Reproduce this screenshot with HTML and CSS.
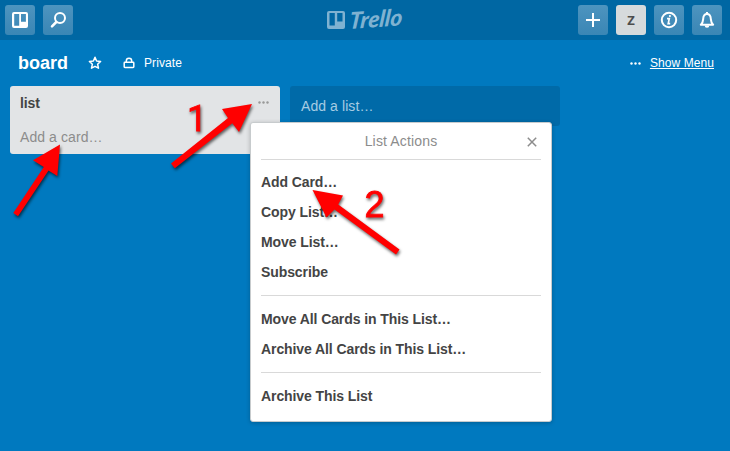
FILE: index.html
```html
<!DOCTYPE html>
<html lang="en">
<head>
<meta charset="utf-8">
<title>board | Trello</title>
<link rel="stylesheet" href="styles.css">
</head>
<body>
<header class="topbar">
  <div class="group">
    <button class="btn" aria-label="Boards"><svg width="30" height="30" viewBox="0 0 30 30"><path fill="#fff" fill-rule="evenodd" d="M9 7h12a2 2 0 0 1 2 2v12a2 2 0 0 1-2 2H9a2 2 0 0 1-2-2V9a2 2 0 0 1 2-2zM9.200 9v11.800h5V9zM16 9v7.800h4.900V9z"/></svg></button>
    <button class="btn" aria-label="Search"><svg width="30" height="30" viewBox="0 0 30 30" fill="none" stroke="#fff"><circle cx="17" cy="13" r="5" stroke-width="2"/><path d="M13.300 17l-4.300 4.300" stroke-width="2.500" stroke-linecap="round"/></svg></button>
  </div>
  <div class="logo">
    <svg width="18" height="18" viewBox="0 0 18 18"><path fill="#7fb2d1" fill-rule="evenodd" d="M2 0h14a2 2 0 0 1 2 2v14a2 2 0 0 1-2 2H2a2 2 0 0 1-2-2V2a2 2 0 0 1 2-2zM2.500 2v12.500h5.300V2zM10.200 2v8.500h5.300V2z"/></svg>
    <svg class="wordmark" width="76" height="40" viewBox="0 0 76 40"><text x="2" y="29" textLength="53" lengthAdjust="spacingAndGlyphs" transform="rotate(-4 2 29) skewX(-10) translate(5 0)">Trello</text></svg>
  </div>
  <div class="group">
    <button class="btn" aria-label="Create"><svg width="30" height="30" viewBox="0 0 30 30"><path d="M15 8v14M8 15h14" stroke="#fff" stroke-width="2"/></svg></button>
    <button class="btn avatar">Z</button>
    <button class="btn" aria-label="Information"><svg width="30" height="30" viewBox="0 0 30 30" fill="none" stroke="#fff"><circle cx="15" cy="15" r="7.200" stroke-width="2"/><path d="M13 13.700h2.300l-1.100 4.900h2" stroke-width="1.700"/><circle cx="15.900" cy="11" r="1.100" fill="#fff" stroke="none"/></svg></button>
    <button class="btn" aria-label="Notifications"><svg width="30" height="30" viewBox="0 0 30 30"><path d="M8.800 19.700c2.200-1.700 2.200-3.200 2.400-6C11.400 10.300 13 9 15 9s3.600 1.300 3.800 4.700c.2 2.800.2 4.300 2.400 6z" fill="none" stroke="#fff" stroke-width="2" stroke-linejoin="round"/><path d="M15 7v2" stroke="#fff" stroke-width="2"/><path d="M12.700 20.500h4.600a2.300 2.300 0 0 1-4.600 0z" fill="#fff"/></svg></button>
  </div>
</header>

<div class="board-header">
  <h1>board</h1>
  <svg class="star" width="14" height="14" viewBox="0 0 14 14"><path d="M7 1.300l1.600 3.700 4 .4-3 2.800.9 4L7 10.300l-3.500 1.900.9-4-3-2.800 4-.4z" fill="none" stroke="#fff" stroke-width="1.500" stroke-linejoin="round"/></svg>
  <svg class="lock" width="12" height="12" viewBox="0 0 12 12" fill="none" stroke="#fff" stroke-width="1.500"><rect x="1.200" y="5.200" width="9.600" height="5.300" rx=".7"/><path d="M3.300 5.200V4a2.700 2.700 0 0 1 5.400 0v1.200"/></svg>
  <span class="private">Private</span>
  <svg class="menu-dots" width="11" height="3" viewBox="0 0 11 3" fill="#fff"><circle cx="1.500" cy="1.500" r="1.200"/><circle cx="5.500" cy="1.500" r="1.200"/><circle cx="9.500" cy="1.500" r="1.200"/></svg>
  <a class="show-menu">Show Menu</a>
</div>

<main class="lists">
  <section class="list">
    <div class="list-head"><h2>list</h2><svg width="11" height="3" viewBox="0 0 11 3" fill="#999"><circle cx="1.500" cy="1.500" r="1.200"/><circle cx="5.500" cy="1.500" r="1.200"/><circle cx="9.500" cy="1.500" r="1.200"/></svg></div>
    <div class="add-card">Add a card…</div>
  </section>
  <section class="add-list">Add a list…</section>
</main>

<aside class="popover">
  <div class="pop-head"><span>List Actions</span><svg class="close" width="10" height="10" viewBox="0 0 10 10"><path d="M.8.8l8.400 8.400M9.200.8L.8 9.200" stroke="#8c8c8c" stroke-width="1.500"/></svg></div>
  <ul><li>Add Card…</li><li>Copy List…</li><li>Move List…</li><li>Subscribe</li></ul>
  <ul><li>Move All Cards in This List…</li><li>Archive All Cards in This List…</li></ul>
  <ul><li>Archive This List</li></ul>
</aside>

<svg class="annotations" width="730" height="451" viewBox="0 0 730 451">
  <g class="marks">
    <path d="M60 144.500L57.300 176 48.500 170.500 18 216.200 13.300 213 43.800 167 33 160.300z"/>
    <path d="M252 104L239 132 232.300 123.200 174.800 168.300 171 163.500 228 118 222 109z"/>
    <path d="M312.500 190L343 195.500 338.200 204.500 399.500 249.500 396 254.500 334.500 209.500 326.500 217.500z"/>
    <text class="one" x="187" y="131">1</text>
    <text x="364.500" y="217">2</text>
  </g>
</svg>
</body>
</html>
```
FILE: styles.css
```css
* { box-sizing: border-box; }
body {
  margin: 0;
  height: 451px;
  overflow: hidden;
  position: relative;
  background: #0079bf;
  color: #444;
  font: 14px/20px "Liberation Sans", Arial, sans-serif;
}
.topbar {
  height: 40px;
  padding: 0 8px 0 5px;
  display: grid;
  grid-template-columns: 1fr auto 1fr;
  align-items: center;
  background: #0067a3;
}
.group { display: flex; gap: 8px; }
.group:last-child { justify-content: flex-end; }
.btn {
  width: 30px;
  height: 30px;
  padding: 0;
  border: 0;
  border-radius: 3px;
  display: grid;
  place-items: center;
  background: linear-gradient(#4d94bf, #3a86b5);
}
.btn svg { display: block; }
.avatar {
  background: #d6dadc;
  color: #4d4d4d;
  font: bold 13px/30px "Open Sans", sans-serif;
}
.logo { display: flex; align-items: center; gap: 2px; padding-left: 22px; }
.wordmark { display: block; }
.wordmark text {
  font: italic 900 23px Lato, sans-serif;
  fill: #7fb2d1;
}
.board-header {
  height: 46px;
  padding: 0 16px 0 18px;
  display: flex;
  align-items: center;
  color: #fff;
  font-size: 12px;
  letter-spacing: .08px;
}
h1 { margin: 0; font-size: 18px; line-height: 24px; letter-spacing: 0; }
.star { margin-left: 20px; }
.lock { margin-left: 21px; }
.private { margin-left: 9px; }
.menu-dots { margin-left: auto; }
.show-menu { margin-left: 9px; text-decoration: underline; }
.lists { display: flex; align-items: flex-start; gap: 10px; padding: 0 10px; letter-spacing: .08px; }
.list {
  width: 270px;
  height: 68px;
  padding: 7px 11px 7px 10px;
  border-radius: 3px;
  background: #e2e4e6;
}
.list-head { display: flex; justify-content: space-between; align-items: center; }
.list-head svg { position: relative; top: -1px; }
h2 { margin: 0; font-size: 14px; line-height: 20px; letter-spacing: -.1px; }
.add-card { margin-top: 14px; color: #8c8c8c; }
.add-list {
  width: 270px;
  height: 40px;
  padding: 10px 11px;
  border-radius: 3px;
  background: #006aa8;
  color: #a6cce3;
}
.popover {
  position: absolute;
  left: 250px;
  top: 122px;
  width: 302px;
  height: 300px;
  padding: 0 10px;
  border: 1px solid #c7cbcd;
  border-radius: 3px;
  background: #fff;
  box-shadow: 0 1px 4px rgba(0, 0, 0, .22);
}
.pop-head {
  position: relative;
  height: 37px;
  line-height: 36px;
  text-align: center;
  letter-spacing: .15px;
  color: #8c8c8c;
  border-bottom: 1px solid #d9d9d9;
}
.close { position: absolute; right: 4px; top: 14px; }
ul { margin: 0; padding: 7px 0 8px; list-style: none; }
ul + ul { border-top: 1px solid #d9d9d9; padding-top: 8px; }
li { height: 30px; line-height: 30px; font-weight: bold; letter-spacing: -.09px; }
.annotations { position: absolute; left: 0; top: 0; }
.marks { fill: #f00; filter: drop-shadow(1px 2px 1.5px rgba(0, 0, 0, .6)); }
.marks text { font: 36px "Liberation Sans", Arial, sans-serif; stroke: #f00; stroke-width: .8px; }
.marks .one { font-family: Roboto, sans-serif; }
```
